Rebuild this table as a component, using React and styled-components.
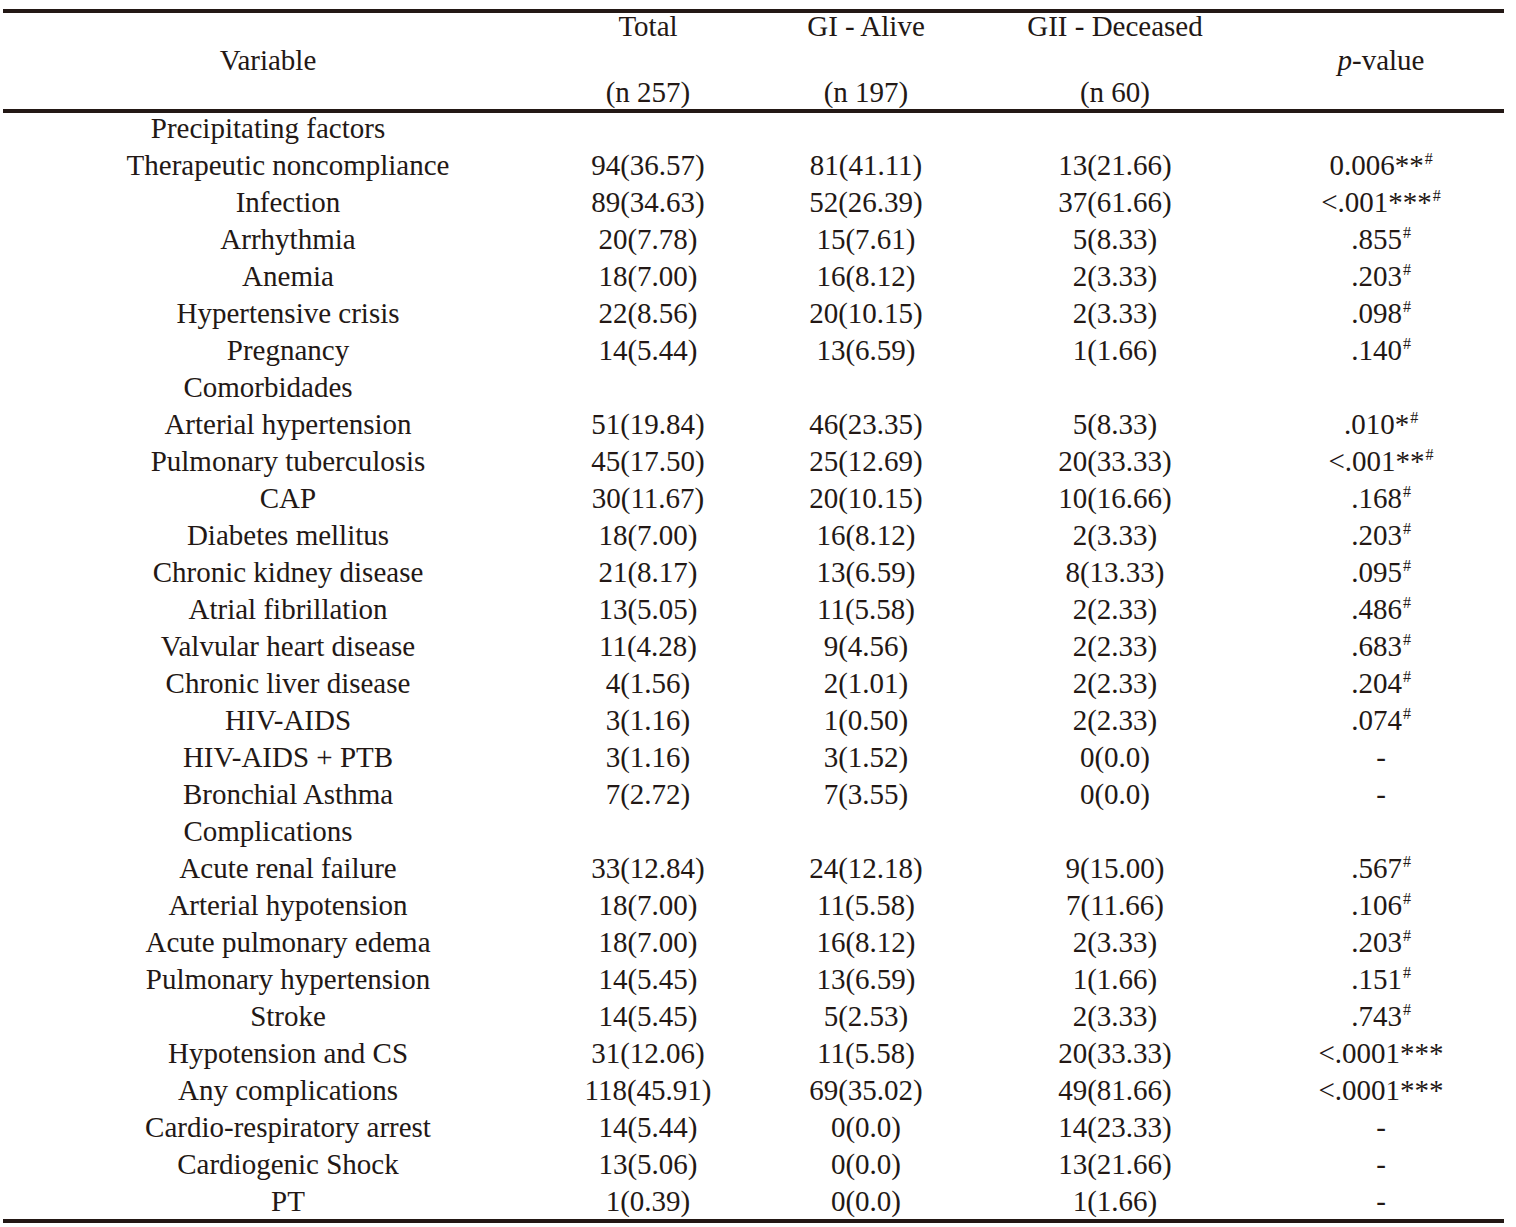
import React from "react";
import styled, { createGlobalStyle } from "styled-components";

const INK = "#231815";

const GlobalStyle = createGlobalStyle`
  html, body {
    margin: 0;
    padding: 0;
    background: #ffffff;
  }
  body {
    font-family: "Liberation Serif", "Times New Roman", serif;
    color: ${INK};
  }
`;

const COLS = "570px 150px 286px 212px 283px";

const Table = styled.div`
  width: 1501px;
  margin: 9px 0 0 3px;
  border-top: 4px solid ${INK};
  border-bottom: 4px solid ${INK};
`;

const Head = styled.div`
  display: grid;
  grid-template-columns: ${COLS};
  grid-template-rows: 34px 32px 30px;
  border-bottom: 4px solid ${INK};
  font-size: 29px;
  line-height: 27px;
  white-space: nowrap;
`;

const HeadCell = styled.div`
  grid-column: ${(p) => p.col};
  grid-row: ${(p) => p.row};
  text-align: center;
  padding-left: ${(p) => (p.col === 5 ? "37px" : "0")};
  padding-right: ${(p) => (p.col === 1 ? "40px" : "0")};
`;

const Body = styled.div`
  display: flex;
  flex-direction: column;
`;

const Row = styled.div`
  display: grid;
  grid-template-columns: ${COLS};
  align-items: baseline;
  height: 37px;
  font-size: 29px;
  line-height: 29px;
  white-space: nowrap;

  &:last-child {
    height: 33px;
  }
`;

const Label = styled.div`
  text-align: center;
  padding-right: ${(p) => (p.$section ? "40px" : "0")};
  padding-top: 1px;
`;

const Num = styled.div`
  text-align: center;
  padding-top: 1px;
`;

const PVal = styled.div`
  text-align: center;
  padding-left: 37px;
  padding-top: 1px;
`;

const Sup = styled.span`
  font-size: 16px;
  line-height: 0;
  vertical-align: 11px;
  margin-left: 1px;
`;

const rows = [
  { section: "Precipitating factors" },
  ["Therapeutic noncompliance", "94(36.57)", "81(41.11)", "13(21.66)", "0.006**", true],
  ["Infection", "89(34.63)", "52(26.39)", "37(61.66)", "<.001***", true],
  ["Arrhythmia", "20(7.78)", "15(7.61)", "5(8.33)", ".855", true],
  ["Anemia", "18(7.00)", "16(8.12)", "2(3.33)", ".203", true],
  ["Hypertensive crisis", "22(8.56)", "20(10.15)", "2(3.33)", ".098", true],
  ["Pregnancy", "14(5.44)", "13(6.59)", "1(1.66)", ".140", true],
  { section: "Comorbidades" },
  ["Arterial hypertension", "51(19.84)", "46(23.35)", "5(8.33)", ".010*", true],
  ["Pulmonary tuberculosis", "45(17.50)", "25(12.69)", "20(33.33)", "<.001**", true],
  ["CAP", "30(11.67)", "20(10.15)", "10(16.66)", ".168", true],
  ["Diabetes mellitus", "18(7.00)", "16(8.12)", "2(3.33)", ".203", true],
  ["Chronic kidney disease", "21(8.17)", "13(6.59)", "8(13.33)", ".095", true],
  ["Atrial fibrillation", "13(5.05)", "11(5.58)", "2(2.33)", ".486", true],
  ["Valvular heart disease", "11(4.28)", "9(4.56)", "2(2.33)", ".683", true],
  ["Chronic liver disease", "4(1.56)", "2(1.01)", "2(2.33)", ".204", true],
  ["HIV-AIDS", "3(1.16)", "1(0.50)", "2(2.33)", ".074", true],
  ["HIV-AIDS + PTB", "3(1.16)", "3(1.52)", "0(0.0)", "-", false],
  ["Bronchial Asthma", "7(2.72)", "7(3.55)", "0(0.0)", "-", false],
  { section: "Complications" },
  ["Acute renal failure", "33(12.84)", "24(12.18)", "9(15.00)", ".567", true],
  ["Arterial hypotension", "18(7.00)", "11(5.58)", "7(11.66)", ".106", true],
  ["Acute pulmonary edema", "18(7.00)", "16(8.12)", "2(3.33)", ".203", true],
  ["Pulmonary hypertension", "14(5.45)", "13(6.59)", "1(1.66)", ".151", true],
  ["Stroke", "14(5.45)", "5(2.53)", "2(3.33)", ".743", true],
  ["Hypotension and CS", "31(12.06)", "11(5.58)", "20(33.33)", "<.0001***", false],
  ["Any complications", "118(45.91)", "69(35.02)", "49(81.66)", "<.0001***", false],
  ["Cardio-respiratory arrest", "14(5.44)", "0(0.0)", "14(23.33)", "-", false],
  ["Cardiogenic Shock", "13(5.06)", "0(0.0)", "13(21.66)", "-", false],
  ["PT", "1(0.39)", "0(0.0)", "1(1.66)", "-", false],
];

export default function App() {
  return (
    <>
      <GlobalStyle />
      <Table>
        <Head>
          <HeadCell col={1} row={2}>Variable</HeadCell>
          <HeadCell col={2} row={1}>Total</HeadCell>
          <HeadCell col={2} row={3}>(n 257)</HeadCell>
          <HeadCell col={3} row={1}>GI - Alive</HeadCell>
          <HeadCell col={3} row={3}>(n 197)</HeadCell>
          <HeadCell col={4} row={1}>GII - Deceased</HeadCell>
          <HeadCell col={4} row={3}>(n 60)</HeadCell>
          <HeadCell col={5} row={2}>
            <i>p</i>-value
          </HeadCell>
        </Head>
        <Body>
          {rows.map((r, i) =>
            r.section ? (
              <Row key={i}>
                <Label $section>{r.section}</Label>
              </Row>
            ) : (
              <Row key={i}>
                <Label>{r[0]}</Label>
                <Num>{r[1]}</Num>
                <Num>{r[2]}</Num>
                <Num>{r[3]}</Num>
                <PVal>
                  {r[4]}
                  {r[5] && <Sup>#</Sup>}
                </PVal>
              </Row>
            )
          )}
        </Body>
      </Table>
    </>
  );
}
